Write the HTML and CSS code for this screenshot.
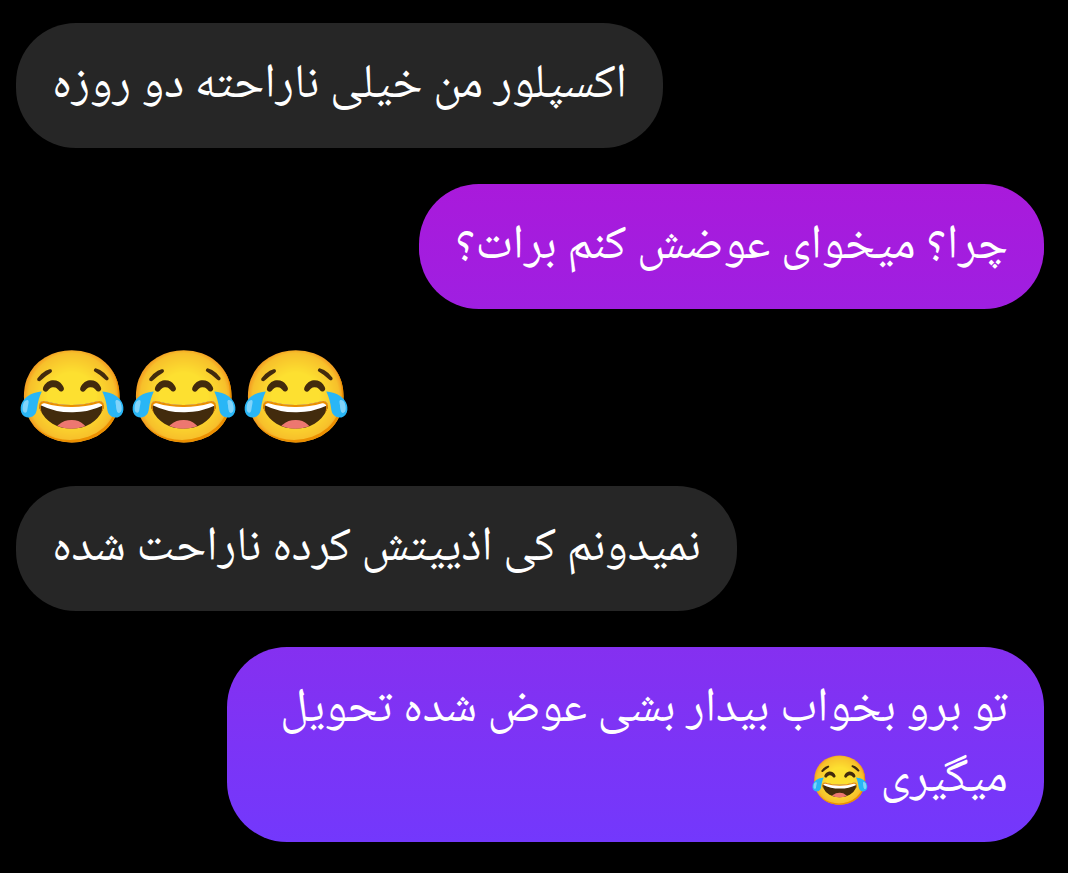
FILE: index.html
```html
<!DOCTYPE html>
<html lang="fa" dir="rtl">
<head>
  <meta charset="UTF-8">
  <meta name="viewport" content="width=device-width, initial-scale=1.0">
  <title>گفتگو</title>
  <link rel="stylesheet" href="styles.css">
</head>
<body>
  <main class="chat">
    <p class="message received">اکسپلور من خیلی ناراحته دو روزه</p>
    <p class="message sent sent-first">چرا؟ میخوای عوضش کنم برات؟</p>
    <p class="emoji">😂😂😂</p>
    <p class="message received">نمیدونم کی اذییتش کرده ناراحت شده</p>
    <p class="message sent sent-last">تو برو بخواب بیدار بشی عوض شده تحویل میگیری 😂</p>
  </main>
</body>
</html>
```
FILE: styles.css
```css
body {
  margin: 0;
  background: #000;
  color: #fff;
  font-family: "Noto Naskh Arabic UI", "Noto Naskh Arabic", serif;
}
.chat {
  display: flex;
  flex-direction: column;
  gap: 36px;
  padding: 23px 24px 31px 16px;
}
.message {
  box-sizing: border-box;
  max-width: 76.5vw;
  margin: 0;
  padding: 27px 36px 28px;
  border-radius: 60px;
  font-size: 48px;
  line-height: 70px;
}
.received {
  align-self: flex-end;
  background: #262626;
}
.sent {
  align-self: flex-start;
}
.sent-first {
  background: linear-gradient(#a91adb, #9f1fe1);
}
.sent-last {
  background: linear-gradient(#8530f0, #7338fc);
}
.emoji {
  align-self: flex-end;
  margin: 0;
  padding-bottom: 8px;
  font-size: 90px;
  line-height: 97px;
}
```
